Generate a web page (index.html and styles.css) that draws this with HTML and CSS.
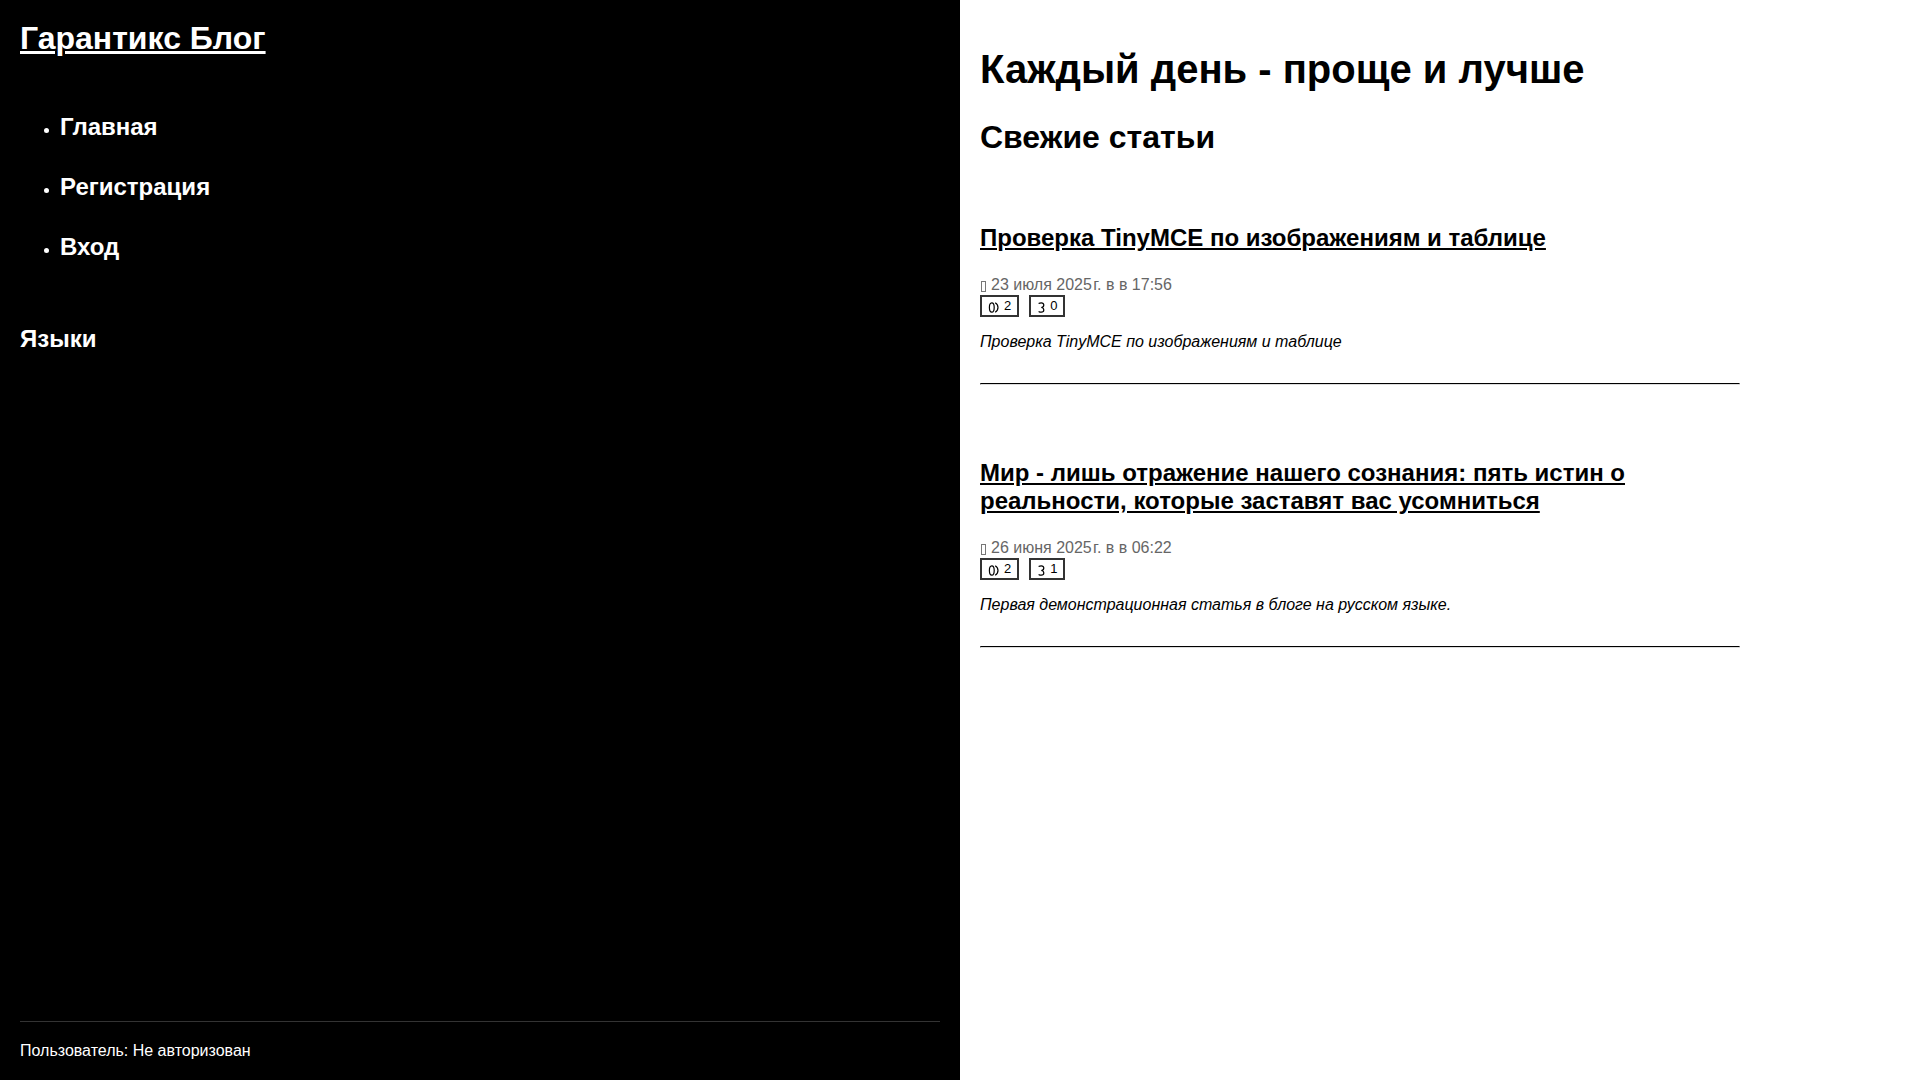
FILE: index.html
```html
<!DOCTYPE html>
<html lang="ru">
<head>
<meta charset="utf-8">
<title>Гарантикс Блог</title>
<link rel="stylesheet" href="styles.css">
</head>
<body>
<div class="layout">
  <aside class="sidebar">
    <div class="sidebar-top">
      <a class="brand" href="#">Гарантикс Блог</a>
      <ul class="nav">
        <li><a href="#">Главная</a></li>
        <li><a href="#">Регистрация</a></li>
        <li><a href="#">Вход</a></li>
      </ul>
      <h3 class="lang-title">Языки</h3>
    </div>
    <div class="sidebar-foot">Пользователь: Не авторизован</div>
  </aside>
  <main class="content">
    <h1 class="page-title">Каждый день - проще и лучше</h1>
    <h2 class="section-title">Свежие статьи</h2>
    <article class="post">
      <h3 class="post-title"><a href="#">Проверка TinyMCE по изображениям и таблице</a></h3>
      <div class="meta"><svg class="ico-cal" width="5" height="11" viewBox="0 0 5 11"><rect x="0.5" y="0.5" width="4" height="10" fill="none" stroke="#777"/></svg><span>23 июля 2025&#x200a;г. в в 17:56</span></div>
      <div class="stats">
        <span class="stat"><svg class="ico-stat" width="11" height="11" viewBox="0 0 11 11"><path d="M3.800 .8q2.400 0 2.400 4.700T3.800 10.200 1.400 5.500 3.800 .8ZM7.200 .8q2.800 1.700 2.800 4.700T7.200 10.200" fill="none" stroke="#000" stroke-width="1.200"/></svg>2</span>
        <span class="stat"><svg class="ico-stat" width="8" height="11" viewBox="0 0 8 11"><path d="M1.600 1.600Q2.800 .8 4.300 .8 6.800 .8 6.800 3q0 2.200-2.500 2.500 2.500.3 2.500 2.500 0 2.200-2.500 2.200Q2.800 10.200 1.600 9.400" fill="none" stroke="#000" stroke-width="1.200"/></svg>0</span>
      </div>
      <p class="excerpt">Проверка TinyMCE по изображениям и таблице</p>
      <hr class="rule">
    </article>
    <article class="post">
      <h3 class="post-title"><a href="#">Мир - лишь отражение нашего сознания: пять истин о реальности, которые заставят вас усомниться</a></h3>
      <div class="meta"><svg class="ico-cal" width="5" height="11" viewBox="0 0 5 11"><rect x="0.5" y="0.5" width="4" height="10" fill="none" stroke="#777"/></svg><span>26 июня 2025&#x200a;г. в в 06:22</span></div>
      <div class="stats">
        <span class="stat"><svg class="ico-stat" width="11" height="11" viewBox="0 0 11 11"><path d="M3.800 .8q2.400 0 2.400 4.700T3.800 10.200 1.400 5.500 3.800 .8ZM7.200 .8q2.800 1.700 2.800 4.700T7.200 10.200" fill="none" stroke="#000" stroke-width="1.200"/></svg>2</span>
        <span class="stat"><svg class="ico-stat" width="8" height="11" viewBox="0 0 8 11"><path d="M1.600 1.600Q2.800 .8 4.300 .8 6.800 .8 6.800 3q0 2.200-2.500 2.500 2.500.3 2.500 2.500 0 2.200-2.500 2.200Q2.800 10.200 1.600 9.400" fill="none" stroke="#000" stroke-width="1.200"/></svg>1</span>
      </div>
      <p class="excerpt">Первая демонстрационная статья в блоге на русском языке.</p>
      <hr class="rule">
    </article>
  </main>
</div>
</body>
</html>
```
FILE: styles.css
```css
html, body { margin: 0; height: 100%; }
body { font-family: "Liberation Sans", Arial, sans-serif; color: #000; background: #fff; }
.layout { display: flex; height: 100vh; }
.sidebar { width: 960px; box-sizing: border-box; padding: 20px; background: #000; color: #fff; display: flex; flex-direction: column; justify-content: space-between; }
.brand { display: block; font-size: 32px; font-weight: 700; line-height: 37px; color: #fff; text-decoration: underline; }
.nav { margin: 56px 0 0; padding: 0 0 0 40px; font-size: 16px; }
.nav li { margin-bottom: 29px; line-height: 28px; }
.nav li:last-child { margin-bottom: 0; }
.nav a { color: #fff; text-decoration: none; font-size: 24px; font-weight: 700; }
.lang-title { margin: 61px 0 0; font-size: 24px; font-weight: 700; line-height: 28px; }
.sidebar-foot { border-top: 1px solid #333; margin: 0; padding-top: 20px; font-size: 16px; line-height: 18px; }
.content { width: 760px; padding: 20px; flex: none; }
.page-title { margin: 26px 0 0; font-size: 40px; line-height: 46px; font-weight: 700; }
.section-title { margin: 27px 0 0; font-size: 32px; line-height: 37px; font-weight: 700; }
.post { margin-bottom: 74px; }
.post-title { margin: 68px 0 0; font-size: 24px; line-height: 28px; font-weight: 700; }
.post-title a { color: #000; text-decoration: underline; }
.meta { margin-top: 24px; font-size: 16px; line-height: 18px; color: #666; display: flex; align-items: center; gap: 5px; }
.ico-cal { flex: none; margin-left: 1px; margin-top: 2px; }
.stats { display: flex; gap: 10px; margin-top: 1px; }
.stat { border: 2px solid #333; padding: 0 6px; font-size: 13px; line-height: 18px; display: flex; gap: 5px; height: 18px; }
.ico-stat { flex: none; margin-top: 5px; }
.excerpt { margin: 16px 0 0; font-size: 16px; line-height: 18px; font-style: italic; }
.rule { margin: 32px 0 0; border: 1px inset #ddd; border-top: 1px solid #000; height: 0; }
```
